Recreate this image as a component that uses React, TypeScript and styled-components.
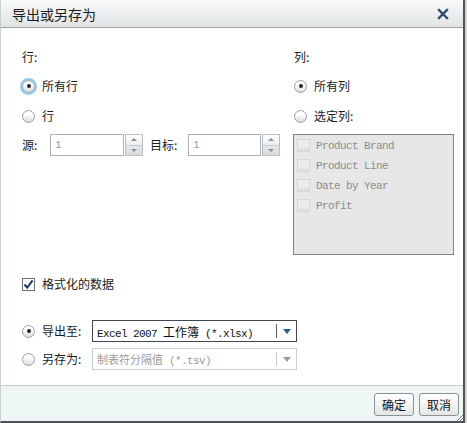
import React from "react";
import styled, { createGlobalStyle } from "styled-components";

const GlobalStyle = createGlobalStyle`
  html, body {
    margin: 0;
    padding: 0;
    background: #d4d6d6;
  }
  body {
    font-family: "Noto Sans CJK SC", "Liberation Sans", sans-serif;
    color: #1a1a1a;
  }
`;

const CJK = `"Noto Sans CJK SC", "Liberation Sans", sans-serif`;
const MONO = `"Liberation Mono", "Noto Sans CJK SC", monospace`;

const Dialog = styled.div`
  position: relative;
  box-sizing: border-box;
  width: 465px;
  height: 423px;
  display: flex;
  flex-direction: column;
  background: #ffffff;
  border-left: 1px solid #c6d2d0;
  border-right: 2px solid #4f5356;
  border-bottom: 2px solid #4f5356;
`;

const TitleBar = styled.div`
  box-sizing: border-box;
  height: 28px;
  flex: none;
  display: flex;
  align-items: center;
  justify-content: space-between;
  padding: 0 14px 0 11px;
  background: linear-gradient(#f8f9f9, #e1e4e5);
  border-bottom: 1px solid #98a1a6;
`;

const Title = styled.span`
  font-family: ${CJK};
  font-size: 14px;
  line-height: 16px;
  color: #1d1d1d;
  margin-top: 1px;
`;

const CloseButton = styled.span`
  display: flex;
  width: 12px;
  height: 12px;
  margin-top: 1px;
`;

const Body = styled.div`
  flex: 1;
  display: flex;
  flex-direction: column;
  padding: 21px 0 0 20px;
`;

const Columns = styled.div`
  display: grid;
  grid-template-columns: 272px 161px;
`;

const Column = styled.div`
  display: flex;
  flex-direction: column;
`;

const SectionLabel = styled.div`
  font-family: ${CJK};
  font-size: 12px;
  line-height: 16px;
  height: 16px;
  padding-left: 1px;
`;

const Row = styled.div<{ $top: number; $height?: number }>`
  display: flex;
  align-items: center;
  height: ${(p) => p.$height ?? 20}px;
  margin-top: ${(p) => p.$top}px;
`;

const Radio = styled.span<{ $checked?: boolean; $focused?: boolean }>`
  position: relative;
  flex: none;
  box-sizing: border-box;
  width: 13px;
  height: 13px;
  margin-left: 1px;
  border-radius: 50%;
  border: 1px solid #9aa0a6;
  background: linear-gradient(#ffffff 30%, #d9dcdf);
  box-shadow: ${(p) => (p.$focused ? "0 0 0 2px #8ccbf1" : "none")};

  &::after {
    content: "";
    display: ${(p) => (p.$checked ? "block" : "none")};
    position: absolute;
    left: 50%;
    top: 50%;
    width: 4px;
    height: 4px;
    margin: -2px 0 0 -2px;
    border-radius: 50%;
    background: #262626;
  }
`;

const OptionText = styled.span<{ $width?: number }>`
  font-family: ${CJK};
  font-size: 12px;
  line-height: 16px;
  margin-left: 7px;
  width: ${(p) => (p.$width ? `${p.$width}px` : "auto")};
  flex: none;
`;

const FieldLabel = styled.span<{ $width: number; $lead?: number }>`
  font-family: ${CJK};
  font-size: 12px;
  line-height: 16px;
  width: ${(p) => p.$width}px;
  margin-left: ${(p) => p.$lead ?? 0}px;
  flex: none;
`;

const NumberInput = styled.div<{ $width: number }>`
  box-sizing: border-box;
  width: ${(p) => p.$width}px;
  height: 22px;
  border: 1px solid #aab2ba;
  display: flex;
  align-items: center;
  padding-left: 4px;
  font-family: ${MONO};
  font-size: 11px;
  color: #9a9a9a;
  background: #ffffff;
`;

const Spinner = styled.div`
  box-sizing: border-box;
  width: 18px;
  height: 22px;
  margin-left: 1px;
  display: flex;
  flex-direction: column;
  border: 1px solid #b9bec3;
`;

const SpinHalf = styled.span<{ $down?: boolean }>`
  flex: 1;
  display: flex;
  align-items: center;
  justify-content: center;
  background: ${(p) =>
    p.$down ? "linear-gradient(#e6e8ea, #d8dbde)" : "linear-gradient(#ffffff, #eceeef)"};
  border-top: ${(p) => (p.$down ? "1px solid #c9cdd1" : "none")};

  &::before {
    content: "";
    width: 0;
    height: 0;
    border-left: 3px solid transparent;
    border-right: 3px solid transparent;
    ${(p) =>
      p.$down ? "border-top: 3px solid #8a8f94;" : "border-bottom: 3px solid #8a8f94;"}
  }
`;

const ListBox = styled.div`
  box-sizing: border-box;
  margin-top: 8px;
  width: 161px;
  height: 121px;
  border: 1px solid #7b838d;
  background: #e7e7e7;
  padding: 4px 0 0 3px;
  display: flex;
  flex-direction: column;
`;

const ListItem = styled.div`
  display: flex;
  align-items: center;
  height: 13px;
  margin-bottom: 7px;
`;

const GhostBox = styled.span`
  box-sizing: border-box;
  width: 13px;
  height: 13px;
  flex: none;
  border: 1px solid #d6d6d6;
  background: linear-gradient(#ececec 55%, #dcdcdc);
`;

const ListText = styled.span`
  margin-left: 6px;
  font-family: ${MONO};
  font-size: 11px;
  letter-spacing: -0.6px;
  color: #8d8d8d;
  white-space: pre;
`;

const CheckBox = styled.span`
  box-sizing: border-box;
  width: 13px;
  height: 13px;
  flex: none;
  margin-left: 1px;
  border: 1px solid #6b6f73;
  background: #ffffff;
  display: flex;
  align-items: center;
  justify-content: center;
`;

const Select = styled.div<{ $disabled?: boolean }>`
  box-sizing: border-box;
  width: 205px;
  height: 22px;
  display: flex;
  align-items: center;
  padding-left: 4px;
  border: 1px solid ${(p) => (p.$disabled ? "#c8ccd0" : "#3f4750")};
  background: #ffffff;
  color: ${(p) => (p.$disabled ? "#9c9c9c" : "#111111")};
`;

const SelectValue = styled.span`
  flex: 1;
  font-family: ${MONO};
  font-size: 11px;
  letter-spacing: -0.6px;
  white-space: pre;
`;

const Wide = styled.span<{ $size: number }>`
  font-family: ${CJK};
  font-size: ${(p) => p.$size}px;
  letter-spacing: 0;
`;

const SelectArrow = styled.span<{ $disabled?: boolean }>`
  box-sizing: border-box;
  width: 20px;
  height: 14px;
  display: flex;
  align-items: center;
  justify-content: center;
  border-left: 1px solid ${(p) => (p.$disabled ? "#c8c8c8" : "#5b5f63")};

  &::before {
    content: "";
    width: 0;
    height: 0;
    border-left: 4px solid transparent;
    border-right: 4px solid transparent;
    border-top: 5px solid ${(p) => (p.$disabled ? "#9c9c9c" : "#245a8c")};
  }
`;

const Footer = styled.div`
  box-sizing: border-box;
  position: relative;
  height: 36px;
  flex: none;
  display: flex;
  justify-content: flex-end;
  align-items: center;
  gap: 5px;
  padding: 1px 4px 0 0;
  background: #eef7f6;
  border-top: 1px solid #c4cccd;
`;

const Button = styled.button`
  box-sizing: border-box;
  width: 40px;
  height: 23px;
  padding: 0;
  border: 1px solid #8c9196;
  border-radius: 3px;
  background: linear-gradient(#ffffff, #e4e6e8);
  font-family: ${CJK};
  font-size: 12px;
  color: #111111;
`;

const Grip = styled.span`
  position: absolute;
  right: 0;
  bottom: 0;
  width: 6px;
  height: 6px;
  display: flex;
`;

const items = ["Product Brand", "Product Line", "Date by Year", "Profit"];

export default function App() {
  return (
    <>
      <GlobalStyle />
      <Dialog>
        <TitleBar>
          <Title>导出或另存为</Title>
          <CloseButton>
            <svg width="12" height="12" viewBox="0 0 12 12">
              <path d="M2 2 L10 10 M10 2 L2 10" stroke="#2c4a6b" strokeWidth="2.4" strokeLinecap="square" />
            </svg>
          </CloseButton>
        </TitleBar>
        <Body>
          <Columns>
            <Column>
              <SectionLabel>行:</SectionLabel>
              <Row $top={11}>
                <Radio $checked $focused />
                <OptionText>所有行</OptionText>
              </Row>
              <Row $top={10}>
                <Radio />
                <OptionText>行</OptionText>
              </Row>
              <Row $top={8} $height={22}>
                <FieldLabel $width={28} $lead={1}>源:</FieldLabel>
                <NumberInput $width={74}>1</NumberInput>
                <Spinner>
                  <SpinHalf />
                  <SpinHalf $down />
                </Spinner>
                <FieldLabel $width={38} $lead={7}>目标:</FieldLabel>
                <NumberInput $width={73}>1</NumberInput>
                <Spinner>
                  <SpinHalf />
                  <SpinHalf $down />
                </Spinner>
              </Row>
            </Column>
            <Column>
              <SectionLabel>列:</SectionLabel>
              <Row $top={11}>
                <Radio $checked />
                <OptionText>所有列</OptionText>
              </Row>
              <Row $top={10}>
                <Radio />
                <OptionText>选定列:</OptionText>
              </Row>
              <ListBox>
                {items.map((item) => (
                  <ListItem key={item}>
                    <GhostBox />
                    <ListText>{item}</ListText>
                  </ListItem>
                ))}
              </ListBox>
            </Column>
          </Columns>
          <Row $top={19}>
            <CheckBox>
              <svg width="11" height="11" viewBox="0 0 11 11">
                <path d="M1.5 5.5 L4.2 8.6 L9.6 1.4" fill="none" stroke="#1b3a66" strokeWidth="2" />
              </svg>
            </CheckBox>
            <OptionText>格式化的数据</OptionText>
          </Row>
          <Row $top={26} $height={22}>
            <Radio $checked />
            <OptionText $width={50}>导出至:</OptionText>
            <Select>
              <SelectValue>
                Excel 2007 <Wide $size={12}>工作簿</Wide> (*.xlsx)
              </SelectValue>
              <SelectArrow />
            </Select>
          </Row>
          <Row $top={6} $height={22}>
            <Radio />
            <OptionText $width={50}>另存为:</OptionText>
            <Select $disabled>
              <SelectValue>
                <Wide $size={11}>制表符分隔值</Wide> (*.tsv)
              </SelectValue>
              <SelectArrow $disabled />
            </Select>
          </Row>
        </Body>
        <Footer>
          <Button>确定</Button>
          <Button>取消</Button>
          <Grip>
            <svg width="6" height="6" viewBox="0 0 6 6">
              <path d="M6 0 L0 6 M6 3 L3 6" stroke="#7a7f83" strokeWidth="1" />
            </svg>
          </Grip>
        </Footer>
      </Dialog>
    </>
  );
}
